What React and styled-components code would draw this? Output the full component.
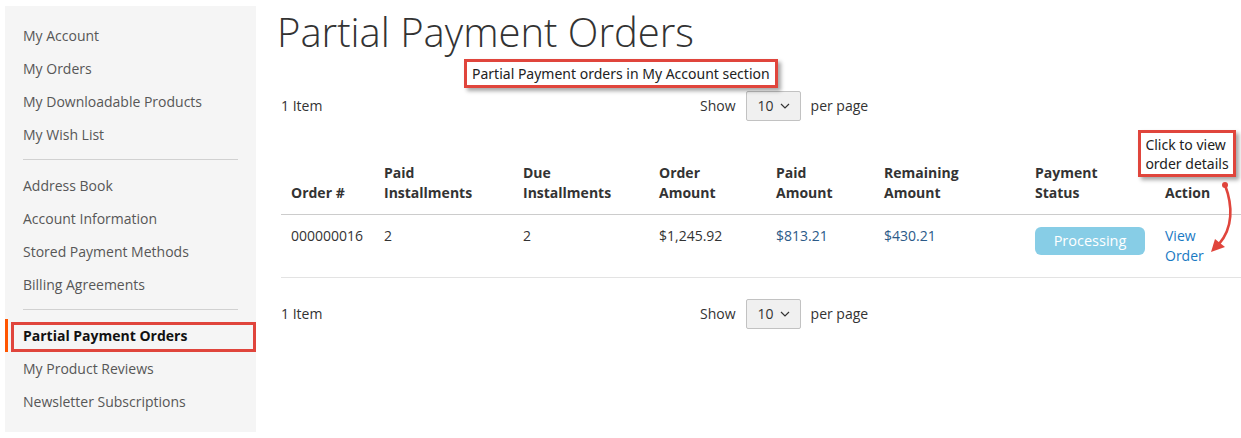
import React from 'react';
import styled, { createGlobalStyle } from 'styled-components';

const GlobalStyle = createGlobalStyle`
  body {
    margin: 0;
    background: #fff;
    font-family: 'Open Sans', 'Noto Sans', sans-serif;
    color: #333;
  }
`;

const navGroups = [
  ['My Account', 'My Orders', 'My Downloadable Products', 'My Wish List'],
  ['Address Book', 'Account Information', 'Stored Payment Methods', 'Billing Agreements'],
  ['Partial Payment Orders', 'My Product Reviews', 'Newsletter Subscriptions'],
];

const columns = [
  { lines: ['Order #'], width: 93 },
  { lines: ['Paid', 'Installments'], width: 139 },
  { lines: ['Due', 'Installments'], width: 136 },
  { lines: ['Order', 'Amount'], width: 117 },
  { lines: ['Paid', 'Amount'], width: 108 },
  { lines: ['Remaining', 'Amount'], width: 151 },
  { lines: ['Payment', 'Status'], width: 130 },
  { lines: ['Action'], width: 86 },
];

function Toolbar({ gap }) {
  return (
    <ToolbarRow gap={gap}>
      <Amount>1 Item</Amount>
      <Limiter>
        <span>Show</span>
        <Select>
          10
          <svg width='10' height='6' viewBox='0 0 10 6'>
            <path d='M1 1l4 4 4-4' fill='none' stroke='#333' strokeWidth='1.2' />
          </svg>
        </Select>
        <span>per page</span>
      </Limiter>
    </ToolbarRow>
  );
}

export default function App() {
  return (
    <Page>
      <GlobalStyle />
      <Sidebar>
        {navGroups.map((group, gi) => (
          <React.Fragment key={gi}>
            {gi > 0 && <Divider />}
            {group.map((item) => (
              <NavItem key={item} current={item === 'Partial Payment Orders'}>
                {item}
              </NavItem>
            ))}
          </React.Fragment>
        ))}
      </Sidebar>

      <Main>
        <Title>Partial Payment Orders</Title>
        <Toolbar gap={34} />
        <Table>
          <colgroup>
            {columns.map((c, i) => (
              <col key={i} style={{ width: c.width }} />
            ))}
          </colgroup>
          <thead>
            <tr>
              {columns.map((c, i) => (
                <Th key={i}>
                  {c.lines.map((l) => (
                    <HeadLine key={l}>{l}</HeadLine>
                  ))}
                </Th>
              ))}
            </tr>
          </thead>
          <tbody>
            <tr>
              <Td>000000016</Td>
              <Td>2</Td>
              <Td>2</Td>
              <Td>$1,245.92</Td>
              <Td tone='blue'>$813.21</Td>
              <Td tone='blue'>$430.21</Td>
              <Td>
                <Badge>Processing</Badge>
              </Td>
              <Td>
                <ViewLink href='#'>View Order</ViewLink>
              </Td>
            </tr>
          </tbody>
        </Table>
        <Toolbar gap={21} />
      </Main>

      <Callout top={59} left={464} width={314} height={29}>
        Partial Payment orders in My Account section
      </Callout>
      <Callout top={130} left={1138} width={98} height={47} center>
        Click to view
        <br />
        order details
      </Callout>
      <Arrow width='40' height='80' viewBox='0 0 40 80'>
        <circle cx='25' cy='5' r='3' fill='#e0453c' />
        <path d='M25 5 C 33 26, 33 48, 19 64' fill='none' stroke='#e0453c' strokeWidth='2.6' />
        <polygon points='11,72 15,59 25,67' fill='#e0453c' />
      </Arrow>
      <CurrentMark />
    </Page>
  );
}

const Page = styled.div`
  position: relative;
  display: flex;
  align-items: flex-start;
  gap: 21px;
  padding: 6px 0 0 5px;
  width: 1241px;
  height: 438px;
  box-sizing: border-box;
`;

const Sidebar = styled.nav`
  width: 251px;
  flex: 0 0 251px;
  height: 426px;
  box-sizing: border-box;
  padding: 13px 0 13px;
  background: #f5f5f5;
`;

const NavItem = styled.div`
  display: flex;
  align-items: center;
  height: 33px;
  box-sizing: border-box;
  padding-left: ${(p) => (p.current ? '15px' : '18px')};
  border-left: ${(p) => (p.current ? '3px solid #ff5501' : 'none')};
  font-size: 14px;
  font-weight: ${(p) => (p.current ? 700 : 400)};
  color: ${(p) => (p.current ? '#111' : '#575757')};
`;

const Divider = styled.div`
  margin: 8px 18px 9px;
  border-top: 1px solid #d1d1d1;
`;

const Main = styled.main`
  flex: 1;
  min-width: 0;
`;

const Title = styled.h1`
  margin: 0;
  font-size: 40px;
  font-weight: 300;
  line-height: 51px;
  color: #333;
`;

const ToolbarRow = styled.div`
  display: flex;
  align-items: center;
  height: 30px;
  margin-top: ${(p) => p.gap}px;
  padding-left: 4px;
  font-size: 14px;
  line-height: 18px;
  color: #333;

  & > div:first-child {
    padding-bottom: 1px;
  }
`;

const Amount = styled.div`
  flex: 0 0 419px;
`;

const Limiter = styled.div`
  display: flex;
  align-items: center;
  gap: 10px;
`;

const Select = styled.div`
  display: flex;
  align-items: center;
  gap: 6px;
  height: 30px;
  box-sizing: border-box;
  padding: 0 10px 0 11px;
  border: 1px solid #c2c2c2;
  border-radius: 2px;
  background: #f0f0f0;
`;

const Table = styled.table`
  margin: 31px 0 0 4px;
  width: 960px;
  table-layout: fixed;
  border-collapse: collapse;
  font-size: 14px;
`;

const Th = styled.th`
  padding: 11px 10px;
  text-align: left;
  vertical-align: bottom;
  font-weight: 700;
  line-height: 20px;
  border-bottom: 1px solid #ccc;
`;

const HeadLine = styled.span`
  display: block;
`;

const Td = styled.td`
  padding: 11px 10px;
  vertical-align: top;
  line-height: 20px;
  border-bottom: 1px solid #e3e3e3;
  color: ${(p) => (p.tone === 'blue' ? '#2c5a88' : '#333')};
`;

const Badge = styled.span`
  display: flex;
  align-items: center;
  justify-content: center;
  width: 110px;
  height: 28px;
  margin-top: 1px;
  border-radius: 6px;
  background: #87cde6;
  color: #fff;
  font-size: 14.5px;
`;

const ViewLink = styled.a`
  display: inline-block;
  width: 50px;
  color: #1979c3;
  text-decoration: none;
`;

const Callout = styled.div`
  position: absolute;
  top: ${(p) => p.top}px;
  left: ${(p) => p.left}px;
  width: ${(p) => p.width}px;
  height: ${(p) => p.height}px;
  box-sizing: border-box;
  display: flex;
  flex-direction: column;
  justify-content: center;
  align-items: ${(p) => (p.center ? 'center' : 'flex-start')};
  padding: ${(p) => (p.center ? '0 2px' : '0 5px')};
  border: 3px solid #e0453c;
  background: #fff;
  box-shadow: 3px 3px 4px rgba(0, 0, 0, 0.35);
  font-family: 'Noto Sans', 'Open Sans', sans-serif;
  font-size: 14px;
  line-height: 19px;
  color: #222;
  white-space: nowrap;
`;

const Arrow = styled.svg`
  position: absolute;
  top: 180px;
  left: 1200px;
`;

const CurrentMark = styled.div`
  position: absolute;
  top: 322px;
  left: 11px;
  width: 245px;
  height: 30px;
  box-sizing: border-box;
  border: 3px solid #e0453c;
`;
